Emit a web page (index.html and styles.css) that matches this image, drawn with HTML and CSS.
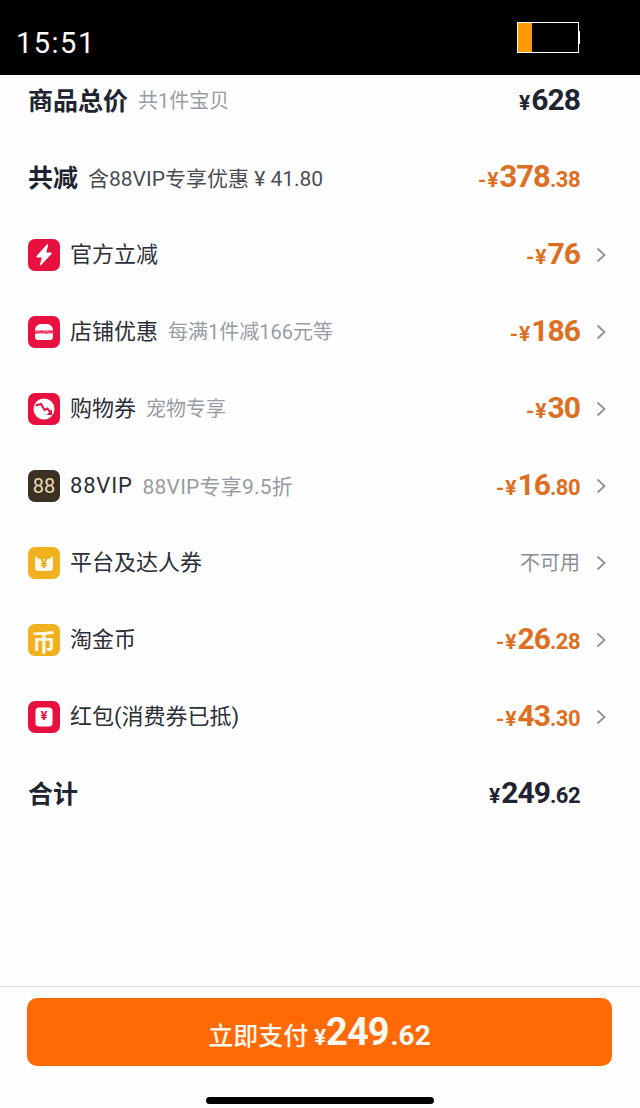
FILE: index.html
```html
<!DOCTYPE html>
<html lang="zh-CN">
<head>
    <meta charset="UTF-8">
    <meta name="viewport" content="width=device-width, initial-scale=1.0">
    <title>立即支付</title>
    <link rel="stylesheet" href="styles.css">
</head>
<body>
    <div class="status-bar">
        <span class="time">15:51</span>
        <div class="battery"><div class="battery-level"></div></div>
    </div>

    <div class="list">
        <div class="row">
            <span class="title">商品总价</span>
            <span class="note">共1件宝贝</span>
            <span class="amount total"><span class="yen">¥</span><span class="num">628</span></span>
            <span class="arrow-slot"></span>
        </div>
        <div class="row">
            <span class="title">共减</span>
            <span class="note dark">含88VIP专享优惠 ¥ 41.80</span>
            <span class="amount"><span class="yen">-¥</span><span class="num big">378</span><span class="cents">.38</span></span>
            <span class="arrow-slot"></span>
        </div>

        <div class="row">
            <span class="icon red">
                <svg viewBox="0 0 32 32"><path d="M18.800 5.500 8.600 17c-.5.600-.1 1.400.7 1.400h4.600l-2 7.200c-.2.700.5 1.100 1 .6l10.600-11.300c.5-.6.100-1.400-.7-1.400h-4.500l1.900-7.500c.2-.7-.9-1-1.400-.5z" fill="#fff"/></svg>
            </span>
            <span class="label">官方立减</span>
            <span class="amount"><span class="yen">-¥</span><span class="num">76</span></span>
            <span class="arrow-slot"><svg class="arrow" viewBox="0 0 10 16"><path d="M1.500 1.500 8.500 8l-7 6.500"/></svg></span>
        </div>
        <div class="row">
            <span class="icon red">
                <svg viewBox="0 0 32 32">
                    <path d="M7 14.500C7 10.500 10 8 13 8h6c3 0 6 2.500 6 6.500z" fill="#fff"/>
                    <path d="M7 17.500h18V21c0 1.700-1.300 3-3 3H10c-1.700 0-3-1.300-3-3z" fill="#fff"/>
                    <path d="M7 16.200c1.500-1.200 3-1.200 4.500 0s3 1.200 4.500 0 3-1.200 4.500 0 3 1.200 4.500 0" fill="none" stroke="#fff" stroke-width=".8" opacity=".7"/>
                </svg>
            </span>
            <span class="label">店铺优惠</span>
            <span class="note">每满1件减166元等</span>
            <span class="amount"><span class="yen">-¥</span><span class="num">186</span></span>
            <span class="arrow-slot"><svg class="arrow" viewBox="0 0 10 16"><path d="M1.500 1.500 8.500 8l-7 6.500"/></svg></span>
        </div>
        <div class="row">
            <span class="icon red">
                <svg viewBox="0 0 32 32">
                    <circle cx="16" cy="16" r="10.500" fill="#fff"/>
                    <path d="M7.500 12.500 13 11l3.500 6 3-1.500 3.500 5" fill="none" stroke="#e8103f" stroke-width="2"/>
                    <path d="M24 16.500V22h-5.500z" fill="#e8103f"/>
                </svg>
            </span>
            <span class="label">购物券</span>
            <span class="note">宠物专享</span>
            <span class="amount"><span class="yen">-¥</span><span class="num">30</span></span>
            <span class="arrow-slot"><svg class="arrow" viewBox="0 0 10 16"><path d="M1.500 1.500 8.500 8l-7 6.500"/></svg></span>
        </div>
        <div class="row">
            <span class="icon vip">88</span>
            <span class="label latin">88VIP</span>
            <span class="note wide">88VIP专享9.5折</span>
            <span class="amount"><span class="yen">-¥</span><span class="num">16</span><span class="cents">.80</span></span>
            <span class="arrow-slot"><svg class="arrow" viewBox="0 0 10 16"><path d="M1.500 1.500 8.500 8l-7 6.500"/></svg></span>
        </div>
        <div class="row">
            <span class="icon yellow">
                <svg viewBox="0 0 32 32"><path d="M7 9 11 12h10l4-3v12c0 1.700-1.300 3-3 3H10c-1.700 0-3-1.300-3-3z" fill="#fff8e6"/></svg>
                <span class="icon-mark yellow-mark">¥</span>
            </span>
            <span class="label">平台及达人券</span>
            <span class="amount off">不可用</span>
            <span class="arrow-slot"><svg class="arrow" viewBox="0 0 10 16"><path d="M1.500 1.500 8.500 8l-7 6.500"/></svg></span>
        </div>
        <div class="row">
            <span class="icon yellow coin">币</span>
            <span class="label">淘金币</span>
            <span class="amount"><span class="yen">-¥</span><span class="num">26</span><span class="cents">.28</span></span>
            <span class="arrow-slot"><svg class="arrow" viewBox="0 0 10 16"><path d="M1.500 1.500 8.500 8l-7 6.500"/></svg></span>
        </div>
        <div class="row">
            <span class="icon red">
                <svg viewBox="0 0 32 32"><rect x="7.500" y="6.500" width="17" height="19" rx="3.500" fill="#fff"/></svg>
                <span class="icon-mark red-mark">¥</span>
            </span>
            <span class="label">红包(消费券已抵)</span>
            <span class="amount"><span class="yen">-¥</span><span class="num">43</span><span class="cents">.30</span></span>
            <span class="arrow-slot"><svg class="arrow" viewBox="0 0 10 16"><path d="M1.500 1.500 8.500 8l-7 6.500"/></svg></span>
        </div>

        <div class="row">
            <span class="title">合计</span>
            <span class="amount total"><span class="yen">¥</span><span class="num">249</span><span class="cents">.62</span></span>
            <span class="arrow-slot"></span>
        </div>
    </div>

    <div class="footer">
        <div class="pay-btn">
            <span class="pay-text">立即支付</span>
            <span class="pay-yen">¥</span><span class="pay-num">249</span><span class="pay-cents">.62</span>
        </div>
        <div class="home-bar"></div>
    </div>
</body>
</html>
```

FILE: styles.css
```css
* {
    box-sizing: border-box;
}
body {
    margin: 0;
    height: 1108px;
    display: flex;
    flex-direction: column;
    background: #fefefe;
    color: #1f2430;
    font-family: Roboto, "Noto Sans CJK SC", sans-serif;
    overflow: hidden;
}
.status-bar {
    height: 75px;
    background: #000;
    color: #fff;
    display: flex;
    justify-content: space-between;
    padding: 22px 61px 0 16px;
}
.time {
    font-size: 29px;
    font-weight: 400;
    letter-spacing: 1.500px;
    line-height: 42px;
}
.battery {
    position: relative;
    width: 62px;
    height: 31px;
    border: 1px solid #fff;
    background: #000;
}
.battery::after {
    content: "";
    position: absolute;
    top: 8px;
    right: -2px;
    width: 1px;
    height: 13px;
    background: #fff;
}
.battery-level {
    width: 14px;
    height: 100%;
    background: #ff9a00;
}
.list {
    flex: 1;
    display: flex;
    flex-direction: column;
    gap: 37px;
    padding-top: 6px;
}
.row {
    height: 40px;
    display: flex;
    align-items: center;
    padding: 0 34px 0 28px;
}
.title {
    font-size: 25px;
    font-weight: 700;
    margin-right: 10px;
    margin-bottom: 5px;
}
.label {
    font-size: 22px;
    color: #2b2f38;
    margin: 0 10px 6px;
}
.label.latin {
    font-size: 22px;
    letter-spacing: .8px;
    margin-bottom: 2px;
}
.note {
    font-size: 20px;
    color: #989ca3;
    margin-bottom: 3px;
}
.note.wide {
    font-size: 21px;
    letter-spacing: .2px;
    margin-bottom: 3px;
}
.note.dark {
    font-size: 21px;
    color: #4a4d55;
}
.icon {
    position: relative;
    width: 32px;
    height: 32px;
    border-radius: 7px;
    flex-shrink: 0;
    display: flex;
    align-items: center;
    justify-content: center;
}
.icon svg {
    width: 32px;
    height: 32px;
}
.red {
    background: #e8103f;
}
.yellow {
    background: #f1b11e;
}
.vip {
    background: #3a3024;
    color: #ecd9b0;
    font-size: 20px;
}
.coin {
    color: #fff8e6;
    font-size: 24px;
    font-weight: 700;
}
.icon-mark {
    position: absolute;
    top: 7px;
    left: 0;
    width: 32px;
    text-align: center;
    font-size: 13px;
    font-weight: 700;
}
.yellow-mark {
    color: #e3a81f;
    top: 9px;
}
.red-mark {
    color: #e8103f;
}
.amount {
    margin-left: auto;
    margin-bottom: 3px;
    color: #dd6f22;
    font-weight: 700;
    white-space: nowrap;
}
.amount.total {
    color: #1f2430;
}
.amount.off {
    color: #8a8f96;
    font-size: 20px;
    font-weight: 400;
}
.yen {
    font-size: 21px;
    letter-spacing: 1px;
}
.num {
    font-size: 30px;
    letter-spacing: -1px;
}
.num.big {
    font-size: 31px;
}
.cents {
    font-size: 22px;
    letter-spacing: -.5px;
}
.arrow-slot {
    width: 26px;
    flex-shrink: 0;
    display: flex;
    justify-content: flex-end;
    margin-bottom: 1px;
}
.arrow {
    width: 10px;
    height: 16px;
    fill: none;
    stroke: #8d9096;
    stroke-width: 1.800;
}
.footer {
    height: 122px;
    border-top: 1px solid #e2e2e2;
    padding: 11px 28px 0 27px;
    display: flex;
    flex-direction: column;
    align-items: center;
}
.pay-btn {
    width: 100%;
    height: 68px;
    background: #ff6a07;
    border-radius: 10px;
    color: #fff8ee;
    display: flex;
    align-items: baseline;
    justify-content: center;
    line-height: 68px;
}
.pay-text {
    font-size: 25px;
    font-weight: 500;
    margin-right: 6px;
}
.pay-yen {
    font-size: 22px;
    font-weight: 700;
}
.pay-num {
    font-size: 38px;
    font-weight: 700;
    letter-spacing: -1px;
}
.pay-cents {
    font-size: 28px;
    font-weight: 700;
    margin-left: 2px;
}
.home-bar {
    width: 228px;
    height: 7px;
    margin-top: 31px;
    background: #000;
    border-radius: 4px;
}
```
